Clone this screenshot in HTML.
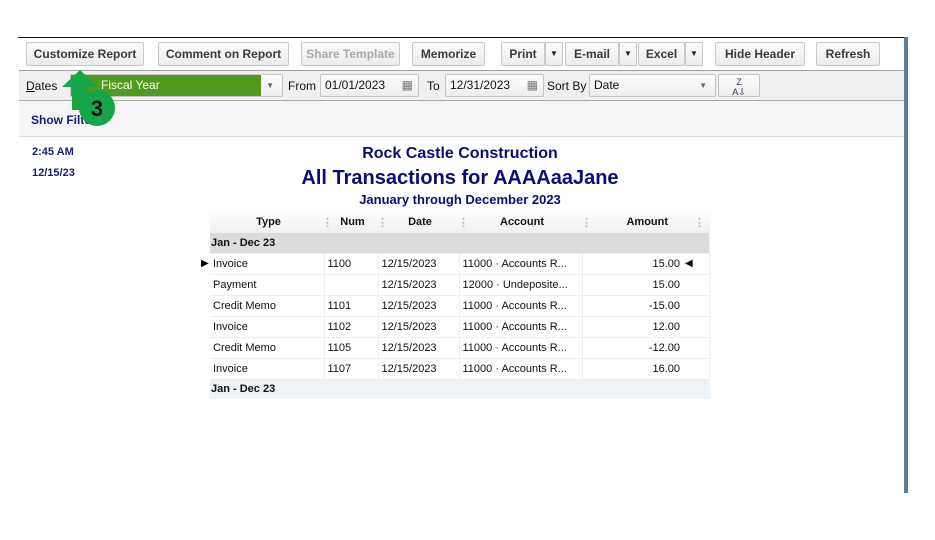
<!DOCTYPE html>
<html><head><meta charset="utf-8"><style>
*{box-sizing:border-box;margin:0;padding:0}
body{width:935px;height:540px;background:#fff;font-family:"Liberation Sans",Arial,sans-serif;position:relative;overflow:hidden;font-size:12px}
.abs{position:absolute}
.btn{position:absolute;top:42px;height:24px;border:1px solid #c8c8c8;border-radius:2px;background:linear-gradient(#fbfbfb,#ececec);font-weight:bold;color:#3a3a3a;font-size:12px;text-align:center;line-height:22px}
.dd{position:absolute;top:42px;height:24px;width:18px;border:1px solid #c8c8c8;background:linear-gradient(#fbfbfb,#ececec);font-size:8px;text-align:center;line-height:22px;color:#222}
.field{position:absolute;top:74px;height:23px;border:1px solid #c4c4c4;border-radius:2px;background:linear-gradient(#fff,#ededed);font-size:12px;line-height:21px;padding-left:4px;color:#111}
.lbl{position:absolute;top:79px;font-size:12px;color:#111}
.blue{color:#1a1a7a;font-weight:bold}
table{border-collapse:collapse;position:absolute;left:210px;top:211px;width:500px;font-size:11px}
td{height:21px;border-right:1px solid #eee;border-bottom:1px solid #eee;padding-left:3px;color:#111}
.sep{position:absolute;top:216px;color:#bbb;font-size:11px;font-weight:bold}
</style></head><body>
<div class="abs" style="left:18px;top:37px;width:888px;height:1px;background:#111"></div>
<div class="abs" style="left:904px;top:37px;width:4px;height:456px;background:#5f7d94"></div>
<div class="abs" style="left:19px;top:70px;width:885px;height:31px;background:#f0f0f0;border-top:1px solid #a0a0a0;border-bottom:1px solid #a8a8a8"></div>
<div class="abs" style="left:19px;top:101px;width:885px;height:36px;background:#f5f5f5;border-bottom:1px solid #ddd"></div>

<div class="btn" style="left:26px;width:118px">Customize Report</div>
<div class="btn" style="left:158px;width:131px">Comment on Report</div>
<div class="btn" style="left:301px;width:99px;color:#aaa">Share Template</div>
<div class="btn" style="left:412px;width:73px">Memorize</div>
<div class="btn" style="left:501px;width:44px">Print</div><div class="dd" style="left:545px">▼</div>
<div class="btn" style="left:565px;width:54px">E-mail</div><div class="dd" style="left:619px">▼</div>
<div class="btn" style="left:638px;width:47px">Excel</div><div class="dd" style="left:685px">▼</div>
<div class="btn" style="left:715px;width:90px">Hide Header</div>
<div class="btn" style="left:816px;width:64px">Refresh</div>

<div class="lbl" style="left:26px"><u>D</u>ates</div>
<div class="field" style="left:70px;width:213px;padding:0"><div style="position:absolute;left:0;top:0;width:190px;height:21px;background:#4f9c1c;color:#fff;padding-left:30px;font-size:12px;line-height:21px">Fiscal Year</div><span style="position:absolute;right:8px;top:0;font-size:8px;color:#666">▼</span></div>
<div class="lbl" style="left:288px">From</div>
<div class="field" style="left:320px;width:99px">01/01/2023<span style="position:absolute;right:5px;color:#777">▦</span></div>
<div class="lbl" style="left:427px">To</div>
<div class="field" style="left:445px;width:99px">12/31/2023<span style="position:absolute;right:5px;color:#777">▦</span></div>
<div class="lbl" style="left:547px">Sort By</div>
<div class="field" style="left:589px;width:127px">Date<span style="position:absolute;right:8px;font-size:8px;color:#666">▼</span></div>
<div class="field" style="left:718px;width:42px;text-align:center;padding:0;font-size:9px;color:#335;line-height:10px;padding-top:2px">Z<br>A⇩</div>

<div class="abs blue" style="left:31px;top:113px;font-size:12px">Show Filters</div>
<div class="abs blue" style="left:32px;top:146px;font-size:11px">2:45 AM</div>
<div class="abs blue" style="left:32px;top:167px;font-size:11px">12/15/23</div>

<div class="abs blue" style="left:210px;width:500px;top:145px;text-align:center;font-size:16px;color:#0c0c78">Rock Castle Construction</div>
<div class="abs blue" style="left:210px;width:500px;top:167px;text-align:center;font-size:20px;color:#0c0c78">All Transactions for AAAAaaJane</div>
<div class="abs blue" style="left:210px;width:500px;top:192px;text-align:center;font-size:13px;color:#0c0c78">January through December 2023</div>

<table>
<tr style="background:linear-gradient(#fff,#f0f0f0);font-weight:bold;text-align:center"><td style="border:0;height:22px;text-align:center;width:114px">Type</td><td style="border:0;width:54px;text-align:center">Num</td><td style="border:0;width:81px;text-align:center">Date</td><td style="border:0;width:123px;text-align:center">Account</td><td style="border:0;text-align:center">Amount</td></tr>
<tr style="background:#dcdcdc"><td colspan="5" style="font-weight:bold;padding-left:1px;height:20px">Jan - Dec 23</td></tr>
<tr><td>Invoice</td><td>1100</td><td>12/15/2023</td><td>11000 · Accounts R...</td><td style="text-align:right;padding-right:29px">15.00</td></tr>
<tr><td>Payment</td><td></td><td>12/15/2023</td><td>12000 · Undeposite...</td><td style="text-align:right;padding-right:29px">15.00</td></tr>
<tr><td>Credit Memo</td><td>1101</td><td>12/15/2023</td><td>11000 · Accounts R...</td><td style="text-align:right;padding-right:29px">-15.00</td></tr>
<tr><td>Invoice</td><td>1102</td><td>12/15/2023</td><td>11000 · Accounts R...</td><td style="text-align:right;padding-right:29px">12.00</td></tr>
<tr><td>Credit Memo</td><td>1105</td><td>12/15/2023</td><td>11000 · Accounts R...</td><td style="text-align:right;padding-right:29px">-12.00</td></tr>
<tr><td>Invoice</td><td>1107</td><td>12/15/2023</td><td>11000 · Accounts R...</td><td style="text-align:right;padding-right:29px">16.00</td></tr>
<tr style="background:#eef3f7"><td colspan="5" style="font-weight:bold;padding-left:1px;height:20px;border:0">Jan - Dec 23</td></tr>
</table>
<div class="sep" style="left:322px">⋮</div><div class="sep" style="left:377px">⋮</div><div class="sep" style="left:458px">⋮</div><div class="sep" style="left:581px">⋮</div><div class="sep" style="left:694px">⋮</div>
<div class="abs" style="left:201px;top:258px;font-size:10px">▶</div>
<div class="abs" style="left:685px;top:258px;font-size:10px">◀</div>

<svg class="abs" style="left:55px;top:65px" width="70" height="65">
<polygon points="25,5 43,22 33,22 33,45 17,45 17,22 7,22" fill="#17a54a"/>
<circle cx="42" cy="43" r="18" fill="#17a54a"/>
<text x="42" y="51" text-anchor="middle" font-family="Liberation Sans" font-weight="bold" font-size="22" fill="#111">3</text>
</svg>
</body></html>
